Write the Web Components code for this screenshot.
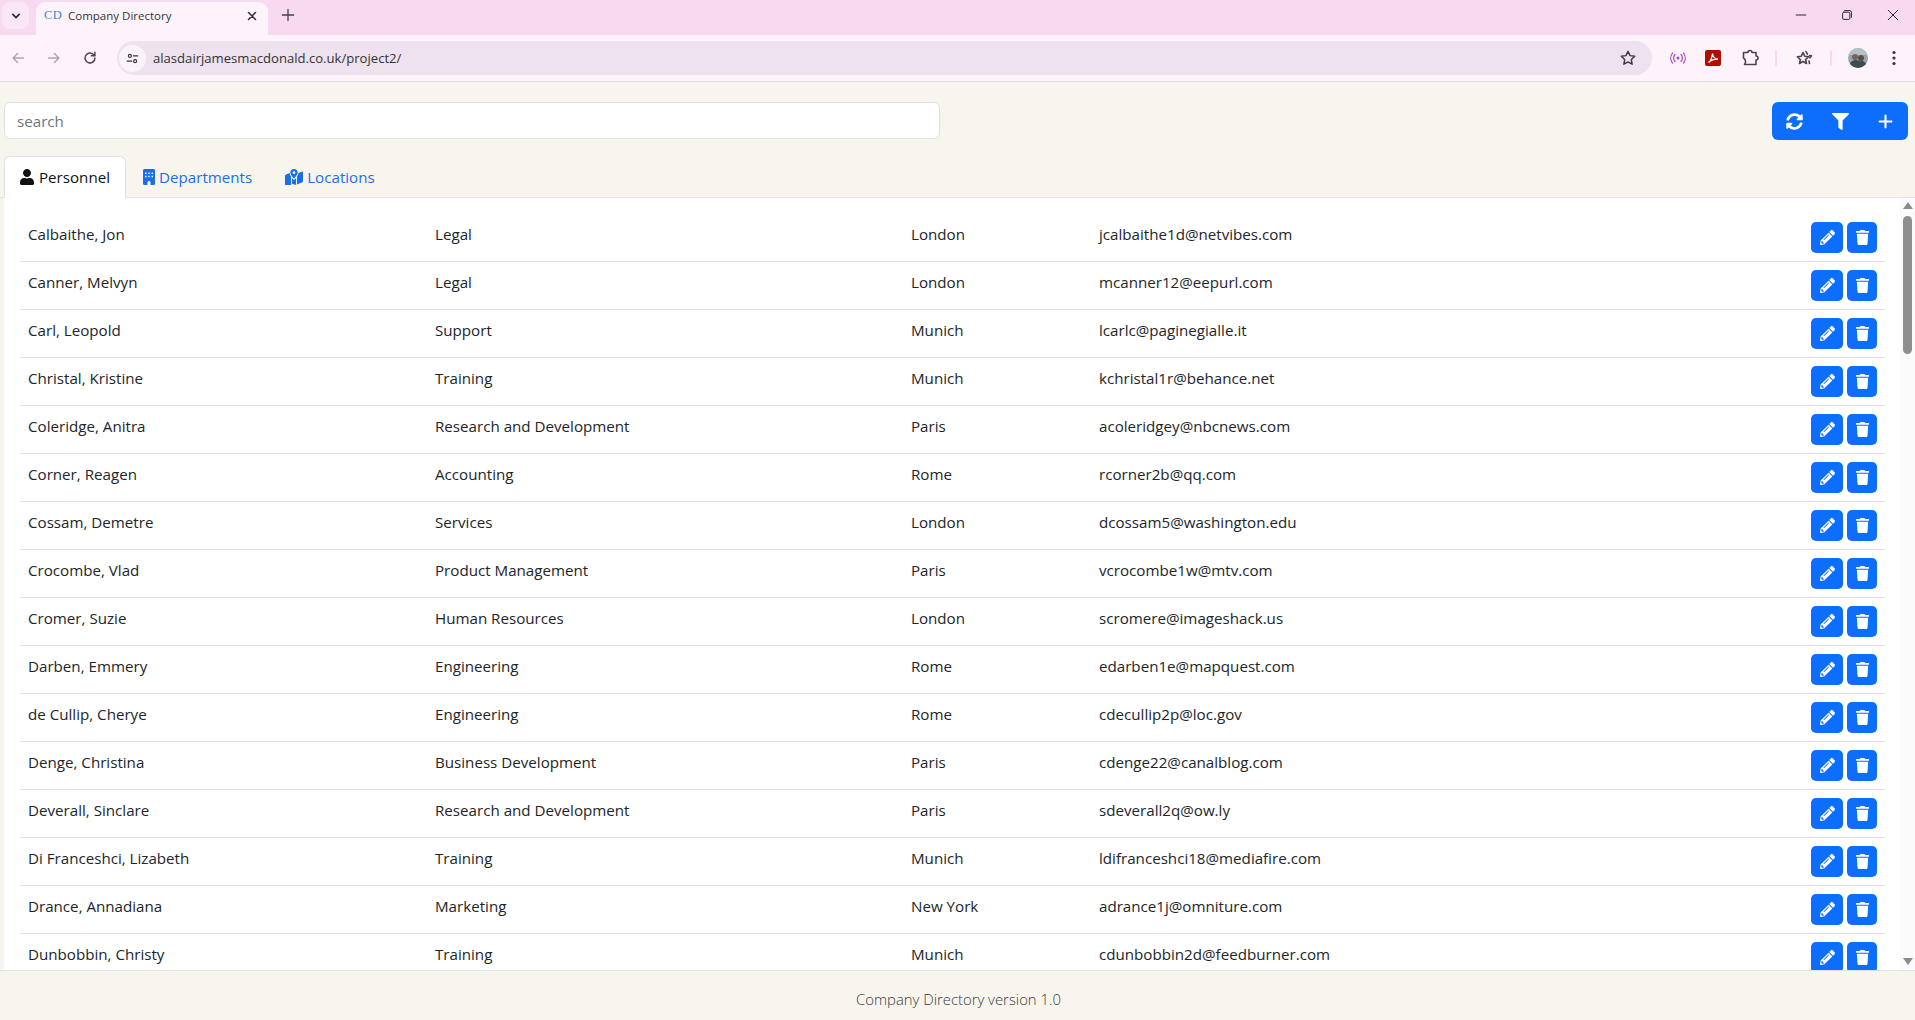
<!DOCTYPE html>
<html lang="en">
<head>
<meta charset="utf-8">
<title>Company Directory</title>
<style>
  html, body { margin: 0; height: 100%; overflow: hidden; }
  body {
    display: flex;
    flex-direction: column;
    font-family: "Open Sans", "Liberation Sans", sans-serif;
    color: #212529;
    background: #f8f5ee;
  }
</style>
</head>
<body>
<browser-chrome></browser-chrome>
<directory-app></directory-app>

<script>
/**
 * Icons used by the page, as inline svg strings.
 */
const fa = (box, d, extra = '') => `<svg viewBox="0 0 ${box} 512" fill="currentColor" ${extra}><path d="${d}"/></svg>`
const ICONS = {
  user: fa(448, 'M224 256c70.7 0 128-57.3 128-128S294.7 0 224 0 96 57.3 96 128s57.3 128 128 128zm89.6 32h-16.7c-22.2 10.2-46.9 16-72.9 16s-50.6-5.8-72.9-16h-16.7C60.2 288 0 348.2 0 422.4V464c0 26.5 21.5 48 48 48h352c26.5 0 48-21.5 48-48v-41.6c0-74.2-60.2-134.4-134.4-134.4z'),
  building: fa(384, 'M48 0C21.5 0 0 21.5 0 48V464c0 26.5 21.5 48 48 48h96V432c0-26.5 21.5-48 48-48s48 21.5 48 48v80h96c26.5 0 48-21.5 48-48V48c0-26.5-21.5-48-48-48H48zM64 112h48v48H64V112zm104 0h48v48h-48V112zm104 0h48v48h-48V112zM64 216h48v48H64V216zm104 0h48v48h-48V216zm104 0h48v48h-48V216z', 'fill-rule="evenodd"'),
  map: `<svg viewBox="0 0 576 512" fill="currentColor"><path fill-rule="evenodd" d="M288 0c-66 0-120 50-120 112 0 50 72 140 104 178a21 21 0 0 0 32 0c32-38 104-128 104-178C408 50 354 0 288 0zm0 72a44 44 0 1 1 0 88 44 44 0 0 1 0-88z"/><path d="M0 210c0-13 8-25 20-30l124-50c4 30 26 80 50 118v264L36 510C18 518 0 504 0 486zM224 290c12 16 24 30 32 40 16 18 48 18 64 0 8-10 20-24 32-40v222l-128-40zM382 248c24-38 46-88 50-118l124-50c10-4 20 4 20 14v296c0 13-8 25-20 30l-174 72z"/></svg>`,
  pencil: fa(512, 'M497.9 142.1l-46.1 46.1c-4.7 4.7-12.3 4.7-17 0l-111-111c-4.7-4.7-4.7-12.3 0-17l46.1-46.1c18.7-18.7 49.1-18.7 67.9 0l60.1 60.1c18.8 18.7 18.8 49.1 0 67.9zM284.2 99.8L21.6 362.4.4 483.9c-2.9 16.4 11.4 30.6 27.8 27.8l121.5-21.3 262.6-262.6c4.7-4.7 4.7-12.3 0-17l-111-111c-4.8-4.7-12.4-4.7-17.1 0zM124.1 339.9c-5.5-5.5-5.5-14.3 0-19.8l154-154c5.5-5.5 14.3-5.5 19.8 0s5.5 14.3 0 19.8l-154 154c-5.5 5.5-14.3 5.5-19.8 0zM88 424h48v36.3l-64.5 11.3-31.1-31.1L51.7 376H88v48z'),
  trash: fa(448, 'M432 32H312l-9.4-18.7A24 24 0 0 0 281.1 0H166.8a23.72 23.72 0 0 0-21.4 13.3L136 32H16A16 16 0 0 0 0 48v32a16 16 0 0 0 16 16h416a16 16 0 0 0 16-16V48a16 16 0 0 0-16-16zM53.2 467a48 48 0 0 0 47.9 45h245.8a48 48 0 0 0 47.9-45L416 128H32z'),
  filter: fa(512, 'M487.976 0H24.028C2.71 0-8.047 25.866 7.058 40.971L192 225.941V432c0 7.831 3.821 15.17 10.237 19.662l80 55.98C298.02 518.69 320 507.493 320 487.98V225.941l184.947-184.97C520.021 25.896 509.338 0 487.976 0z'),
  plus: fa(448, 'M256 80c0-17.7-14.3-32-32-32s-32 14.3-32 32V224H48c-17.7 0-32 14.3-32 32s14.3 32 32 32H192V432c0 17.7 14.3 32 32 32s32-14.3 32-32V288H400c17.7 0 32-14.3 32-32s-14.3-32-32-32H256V80z'),
  sync: fa(512, 'M370.72 133.28C339.458 104.008 298.888 87.962 255.848 88c-77.458.068-144.328 53.178-162.791 126.85-1.344 5.363-6.122 9.15-11.651 9.15H24.103c-7.498 0-13.194-6.807-11.807-14.176C33.933 94.924 134.813 8 256 8c66.448 0 126.791 26.136 171.315 68.685L463.03 40.97C478.149 25.851 504 36.559 504 57.941V192c0 13.255-10.745 24-24 24H345.941c-21.382 0-32.09-25.851-16.971-40.971l41.75-41.749zM32 296h134.059c21.382 0 32.09 25.851 16.971 40.971l-41.75 41.75c31.262 29.273 71.835 45.319 114.876 45.28 77.418-.07 144.315-53.144 162.787-126.849 1.344-5.363 6.122-9.15 11.651-9.15h57.304c7.498 0 13.194 6.807 11.807 14.176C478.067 417.076 377.187 504 256 504c-66.448 0-126.791-26.136-171.315-68.685L48.97 471.03C33.851 486.149 8 475.441 8 454.059V320c0-13.255 10.745-24 24-24z')
}

/**
 * Stroked icons of the browser's own toolbar, on a 20 unit grid.
 */
const chromeIcon = (body, size = 20) => `<svg width="${size}" height="${size}" viewBox="0 0 20 20" fill="none" stroke="currentColor" stroke-width="1.6" stroke-linecap="round" stroke-linejoin="round">${body}</svg>`
const STAR = 'M10 2.6l2.3 4.8 5.2.7-3.8 3.6.9 5.2-4.6-2.5-4.6 2.5.9-5.2L2.5 8.1l5.2-.7z'

const PEOPLE = [
  ['Calbaithe, Jon', 'Legal', 'London', 'jcalbaithe1d@netvibes.com'],
  ['Canner, Melvyn', 'Legal', 'London', 'mcanner12@eepurl.com'],
  ['Carl, Leopold', 'Support', 'Munich', 'lcarlc@paginegialle.it'],
  ['Christal, Kristine', 'Training', 'Munich', 'kchristal1r@behance.net'],
  ['Coleridge, Anitra', 'Research and Development', 'Paris', 'acoleridgey@nbcnews.com'],
  ['Corner, Reagen', 'Accounting', 'Rome', 'rcorner2b@qq.com'],
  ['Cossam, Demetre', 'Services', 'London', 'dcossam5@washington.edu'],
  ['Crocombe, Vlad', 'Product Management', 'Paris', 'vcrocombe1w@mtv.com'],
  ['Cromer, Suzie', 'Human Resources', 'London', 'scromere@imageshack.us'],
  ['Darben, Emmery', 'Engineering', 'Rome', 'edarben1e@mapquest.com'],
  ['de Cullip, Cherye', 'Engineering', 'Rome', 'cdecullip2p@loc.gov'],
  ['Denge, Christina', 'Business Development', 'Paris', 'cdenge22@canalblog.com'],
  ['Deverall, Sinclare', 'Research and Development', 'Paris', 'sdeverall2q@ow.ly'],
  ['Di Franceshci, Lizabeth', 'Training', 'Munich', 'ldifranceshci18@mediafire.com'],
  ['Drance, Annadiana', 'Marketing', 'New York', 'adrance1j@omniture.com'],
  ['Dunbobbin, Christy', 'Training', 'Munich', 'cdunbobbin2d@feedburner.com']
]

/**
 * The browser window around the page: tab strip and toolbar.
 */
customElements.define('browser-chrome', class extends HTMLElement {
  constructor () {
    super()
    this.attachShadow({ mode: 'open' }).innerHTML = `
      <style>
        :host { display: block; flex: none; font-family: "Open Sans", "Liberation Sans", sans-serif; color: #3d3540; }
        .strip { height: 35px; background: #f7d9f0; display: flex; align-items: flex-start; position: relative; }
        .caret { width: 27px; height: 27px; margin: 2px 0 0 2px; border-radius: 8px; background: #fbe6f6; display: flex; align-items: center; justify-content: center; color: #2a2a2a; }
        .tab { width: 232px; height: 33px; margin: 2px 0 0 7px; background: #fff3fb; border-radius: 9px 9px 0 0; display: flex; align-items: center; box-sizing: border-box; padding: 0 9px 7px 8px; font-size: 11.5px; color: #333; }
        .fav { font: 12.5px "Liberation Serif", serif; color: #3a8ad0; width: 24px; letter-spacing: 0.4px; }
        .tab .title { flex: 1; }
        .tab svg { margin-top: 2px; }
        .new { margin: 7px 0 0 12px; color: #444; display: flex; }
        .win { margin-left: auto; margin-right: -1px; display: flex; align-items: center; height: 30px; color: #222; }
        .win span { width: 46px; display: flex; justify-content: center; }
        .bar { height: 46px; background: #fef3fb; border-bottom: 1px solid #e3dce2; display: flex; align-items: center; }
        .nav { width: 36px; display: flex; justify-content: center; color: #4a4450; }
        .nav.off { color: #aca6ad; }
        .omni { flex: 1; height: 34px; margin-left: 9px; border-radius: 17px; background: #eee2ee; display: flex; align-items: center; padding: 0 15px 0 1px; }
        .site { width: 27px; height: 27px; margin-left: 1px; border-radius: 50%; background: #fbf3fa; display: flex; align-items: center; justify-content: center; }
        .url { margin-left: 7px; font-size: 13.1px; color: #333; flex: 1; }
        .ext { flex: none; display: flex; align-items: center; padding-left: 17px; padding-right: 11px; gap: 0; color: #4a4450; }
        .ext > * { flex: none; }
        .sep { width: 2px; height: 16px; background: #f7d9f0; border-radius: 1px; }
        .pdf { width: 16px; height: 16px; border-radius: 2px; background: #b30b00; color: #fff; display: flex; align-items: center; justify-content: center; }
        .avatar { width: 20px; height: 20px; border-radius: 50%; overflow: hidden; }
        svg { display: block; }
      </style>
      <div class="strip">
        <div class="caret">${chromeIcon('<path d="M6 8l4 4 4-4" stroke-width="2"/>', 16)}</div>
        <div class="tab">
          <span class="fav">CD</span>
          <span class="title">Company Directory</span>
          ${chromeIcon('<path d="M5 5l10 10M15 5L5 15" stroke-width="2.2"/>', 14)}
        </div>
        <div class="new">${chromeIcon('<path d="M10 3v14M3 10h14"/>', 16)}</div>
        <div class="win">
          <span>${chromeIcon('<path d="M4 10h12" stroke-width="1.2"/>', 16)}</span>
          <span>${chromeIcon('<rect x="4.5" y="6.5" width="9" height="9" rx="1.5" stroke-width="1.2"/><path d="M7 4.5h6.5a2 2 0 0 1 2 2V13" stroke-width="1.2"/>', 16)}</span>
          <span>${chromeIcon('<path d="M4 4l12 12M16 4L4 16" stroke-width="1.2"/>', 16)}</span>
        </div>
      </div>
      <div class="bar">
        <span class="nav off">${chromeIcon('<path d="M16 10H4.5M9.5 5l-5 5 5 5"/>', 18)}</span>
        <span class="nav off">${chromeIcon('<path d="M4 10h11.5M10.5 5l5 5-5 5"/>', 18)}</span>
        <span class="nav">${chromeIcon('<path d="M15.5 10a5.5 5.5 0 1 1-1.7-4L15.5 7.5M15.5 3.5v4h-4" />', 18)}</span>
        <div class="omni">
          <span class="site">${chromeIcon('<circle cx="6.5" cy="6.5" r="2"/><path d="M11 6.5h6M3 13.5h6"/><circle cx="13.5" cy="13.5" r="2"/>', 15)}</span>
          <span class="url">alasdairjamesmacdonald.co.uk/project2/</span>
          ${chromeIcon(`<path d="${STAR}"/>`, 18)}
        </div>
        <div class="ext">
          <svg width="18" height="14" viewBox="0 0 18 14" fill="none" stroke="#a548c8" stroke-width="1.2" stroke-linecap="round"><circle cx="9" cy="7" r="1.5" fill="#a548c8" stroke="none"/><path d="M6 3.5a5 5 0 0 0 0 7M12 3.5a5 5 0 0 1 0 7M3.5 2a8 8 0 0 0 0 10M14.5 2a8 8 0 0 1 0 10"/></svg>
          <span class="pdf" style="margin-left:18px"><svg width="12" height="12" viewBox="0 0 12 12" fill="none" stroke="#fff" stroke-width="1.3"><path d="M1.5 10.5C3 9.500 5 6 5.500 1.500 6 5 8 7 11 7 8 7 4 8 1.500 10.500z"/></svg></span>
          <span style="margin-left:19px">${chromeIcon('<path d="M3.5 4.5H8a2 2 0 0 1 4 0h4v3.5a2 2 0 0 1 0 4v4.5H4.5c1.5-1.5 1.5-5-1-6.500z"/>', 20)}</span>
          <span class="sep" style="margin-left:15px"></span>
          <span style="margin-left:17px">${chromeIcon(`<path d="M9 4.5l1.7 3.7 4 .5-3 2.8.8 4-3.500-2-3.500 2 .8-4-3-2.800 4-.5zM12 3.500l1.300 2.700M15.500 7.500l2 .3-1.500 2M15 13l.5 2.500"/>`, 20)}</span>
          <span class="sep" style="margin-left:16px"></span>
          <span class="avatar" style="margin-left:16px"><svg width="20" height="20" viewBox="0 0 20 20"><rect width="20" height="20" fill="#93a7ad"/><rect y="0" width="20" height="7" fill="#b4c1c6"/><circle cx="7" cy="9" r="3" fill="#7c6252"/><circle cx="13" cy="10" r="3" fill="#5c4c42"/><path d="M1 20c0-6 4-8 7-8s4 2 5 1 6 1 6 7z" fill="#3f4a52"/></svg></span>
          <span style="margin-left:16px;color:#3d3540"><svg width="20" height="20" viewBox="0 0 20 20" fill="currentColor"><circle cx="10" cy="4.5" r="1.6"/><circle cx="10" cy="10" r="1.6"/><circle cx="10" cy="15.5" r="1.6"/></svg></span>
        </div>
      </div>
    `
  }
})

/**
 * Small blue button with one icon, used in the toolbar group and the rows.
 */
customElements.define('icon-button', class extends HTMLElement {
  constructor () {
    super()
    this.attachShadow({ mode: 'open' })
  }

  connectedCallback () {
    this.shadowRoot.innerHTML = `
      <style>
        :host { display: inline-flex; align-items: center; justify-content: center; background: #0d6efd; color: #fff; box-sizing: border-box; border-radius: var(--radius, 5px); width: var(--w, 32px); height: var(--h, 31px); }
        svg { display: block; width: var(--icon, 15px); height: var(--icon, 15px); }
      </style>
      ${ICONS[this.getAttribute('icon')]}
    `
  }
})

/**
 * Top row with the search field and the action buttons.
 */
customElements.define('action-bar', class extends HTMLElement {
  constructor () {
    super()
    this.attachShadow({ mode: 'open' }).innerHTML = `
      <style>
        :host { display: flex; justify-content: space-between; align-items: flex-start; padding: 20px 7px 0 4px; }
        .search { width: 936px; height: 37px; box-sizing: border-box; background: #fff; border: 1px solid #dee2e6; border-radius: 6px; padding: 0 12px; display: flex; align-items: center; font-size: 15.15px; color: #6c757d; }
        .group { display: flex; border-radius: 6px; overflow: hidden; --w: 45.33px; --h: 38px; --radius: 0; --icon: 17px; }
      </style>
      <div class="search">search</div>
      <div class="group">
        <icon-button icon="sync"></icon-button>
        <icon-button icon="filter"></icon-button>
        <icon-button icon="plus"></icon-button>
      </div>
    `
  }
})

/**
 * The tabs above the table.
 */
customElements.define('tab-bar', class extends HTMLElement {
  constructor () {
    super()
    this.attachShadow({ mode: 'open' }).innerHTML = `
      <style>
        :host { display: flex; margin-top: 16px; height: 42px; box-sizing: border-box; padding-left: 4px; border-bottom: 1px solid #dee2e6; font-size: 15.15px; }
        .tab { height: 41px; box-sizing: border-box; display: flex; align-items: center; padding: 0 15px 0 16px; color: #1a6fe8; border: 1px solid transparent; border-radius: 6px 6px 0 0; }
        .tab svg { height: 16px; margin-right: 4px; }
        .on { color: #111; background: #fff; height: 42px; border-color: #dee2e6 #dee2e6 #fff; padding: 0 15px 0 15px; }
        .on svg { margin-right: 5px; }
      </style>
      <div class="tab on">${ICONS.user}Personnel</div>
      <div class="tab">${ICONS.building}Departments</div>
      <div class="tab">${ICONS.map}Locations</div>
    `
  }
})

/**
 * One person in the table. The four texts come in through named slots.
 */
customElements.define('person-row', class extends HTMLElement {
  constructor () {
    super()
    this.attachShadow({ mode: 'open' }).innerHTML = `
      <style>
        :host { display: grid; grid-template-columns: 407px 476px 188px 1fr auto; height: 48px; box-sizing: border-box; border-bottom: 1px solid #dee2e6; font-size: 15.15px; color: #212529; flex: none; }
        .cell { padding: 8px; line-height: 24px; white-space: nowrap; }
        .actions { display: flex; gap: 4px; padding: 8px 8px 0; }
      </style>
      <div class="cell"><slot name="name"></slot></div>
      <div class="cell"><slot name="dept"></slot></div>
      <div class="cell"><slot name="city"></slot></div>
      <div class="cell"><slot name="email"></slot></div>
      <div class="actions">
        <icon-button icon="pencil"></icon-button>
        <icon-button icon="trash" style="--w:30px;--icon:15px"></icon-button>
      </div>
    `
  }
})

/**
 * White panel with the rows and the scrollbar beside them.
 */
customElements.define('person-table', class extends HTMLElement {
  constructor () {
    super()
    this.attachShadow({ mode: 'open' }).innerHTML = `
      <style>
        :host { display: flex; flex: 1; min-height: 0; margin-left: 4px; background: #fff; }
        .rows { flex: 1; min-width: 0; padding: 16px 15px 0 16px; overflow: hidden; display: flex; flex-direction: column; }
        .bar { width: 15px; flex: none; background: #fbfbfb; display: flex; flex-direction: column; align-items: center; padding: 4px 0; box-sizing: border-box; }
        .up, .down { width: 0; height: 0; border-left: 5px solid transparent; border-right: 5px solid transparent; }
        .up { border-bottom: 7px solid #8b8b8b; }
        .down { border-top: 7px solid #8b8b8b; margin-top: auto; margin-bottom: 1px; }
        .thumb { width: 9px; height: 138px; margin-top: 7px; border-radius: 5px; background: #8f8f8f; }
      </style>
      <div class="rows"></div>
      <div class="bar"><div class="up"></div><div class="thumb"></div><div class="down"></div></div>
    `
    const rows = this.shadowRoot.querySelector('.rows')
    for (const [name, dept, city, email] of PEOPLE) {
      const row = document.createElement('person-row')
      row.innerHTML = `<span slot="name">${name}</span><span slot="dept">${dept}</span><span slot="city">${city}</span><span slot="email">${email}</span>`
      rows.appendChild(row)
    }
  }
})

/**
 * The page itself.
 */
customElements.define('directory-app', class extends HTMLElement {
  constructor () {
    super()
    this.attachShadow({ mode: 'open' }).innerHTML = `
      <style>
        :host { display: flex; flex-direction: column; flex: 1; min-height: 0; background: #f8f5ee; }
        footer { height: 50px; flex: none; box-sizing: border-box; border-top: 1px solid #dee2e6; display: flex; align-items: center; justify-content: center; font-size: 14.85px; font-weight: 300; color: #3a3a3a; padding-top: 7px; padding-left: 2px; }
      </style>
      <action-bar></action-bar>
      <tab-bar></tab-bar>
      <person-table></person-table>
      <footer>Company Directory version 1.0</footer>
    `
  }
})
</script>
</body>
</html>
